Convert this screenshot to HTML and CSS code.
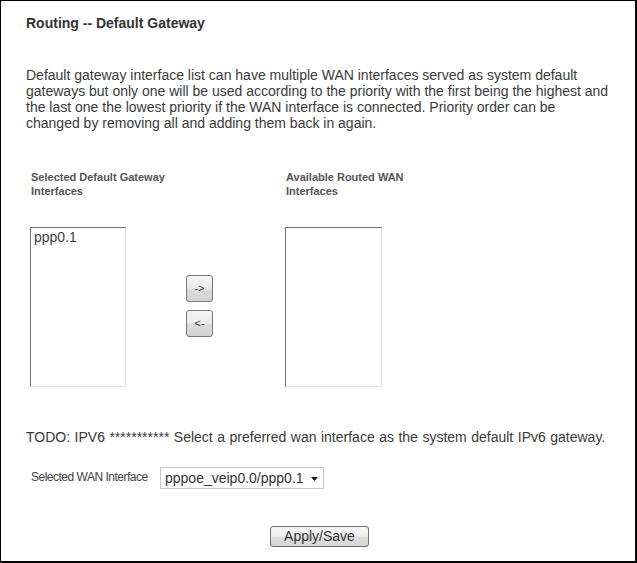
FILE: index.html
```html
<!DOCTYPE html>
<html>
<head>
<meta charset="utf-8">
<title>Routing -- Default Gateway</title>
<link rel="stylesheet" href="styles.css">
</head>
<body>
<div class="page">
  <h1 class="title">Routing -- Default Gateway</h1>
  <p class="intro">Default gateway interface list can have multiple WAN interfaces served as system default gateways but only one will be used according to the priority with the first being the highest and the last one the lowest priority if the WAN interface is connected. Priority order can be changed by removing all and adding them back in again.</p>

  <div class="chooser">
    <div class="col-head">Selected Default Gateway<br>Interfaces</div>
    <div class="col-head-empty"></div>
    <div class="col-head">Available Routed WAN<br>Interfaces</div>

    <div class="listbox">
      <div class="option">ppp0.1</div>
    </div>
    <div class="movers">
      <button class="move-btn" type="button">-&gt;</button>
      <button class="move-btn" type="button">&lt;-</button>
    </div>
    <div class="listbox listbox-right"></div>
  </div>

  <p class="todo">TODO: IPV6 *********** Select a preferred wan interface as the system default IPv6 gateway.</p>

  <div class="wan-row">
    <span class="wan-label">Selected WAN Interface</span>
    <span class="select-wrap">
      <span class="select-box">pppoe_veip0.0/ppp0.1</span>
      <svg class="select-arrow" width="7" height="4" viewBox="0 0 7 4"><path d="M0 0H7L3.5 4Z" fill="#111"/></svg>
    </span>
  </div>

  <div class="actions">
    <button class="apply-btn" type="button">Apply/Save</button>
  </div>
</div>
</body>
</html>
```

FILE: styles.css
```css
html, body {
  margin: 0;
  padding: 0;
  background: #ffffff;
}

.page {
  box-sizing: border-box;
  width: 637px;
  height: 563px;
  border-style: solid;
  border-color: #000;
  border-width: 1px 2px 2px 1px;
  padding: 14px 24px 0 25px;
  font-family: "Liberation Sans", Arial, sans-serif;
  color: #3a3a3a;
}

.title {
  margin: 0;
  font-size: 14px;
  line-height: 16px;
  font-weight: bold;
  color: #333;
}

.intro {
  margin: 36px 0 0 0;
  font-size: 14px;
  line-height: 16px;
}

.chooser {
  margin: 39px 0 0 4px;
  display: grid;
  grid-template-columns: 156px 99px 120px;
  grid-template-rows: 26px 160px;
  row-gap: 31px;
}

.col-head {
  font-size: 11px;
  line-height: 14px;
  font-weight: bold;
  color: #555;
  padding: 0 0 0 1px;
  white-space: nowrap;
}

.listbox {
  box-sizing: border-box;
  width: 96px;
  height: 160px;
  border-style: solid;
  border-width: 1px;
  border-color: #6f6f6f #e2e2e2 #e2e2e2 #6f6f6f;
  background: #fff;
  padding: 1px 0 0 3px;
}

.listbox-right {
  width: 97px;
}

.option {
  font-size: 14px;
  line-height: 16px;
  color: #3c3c3c;
}

.movers {
  display: flex;
  flex-direction: column;
  justify-content: center;
  gap: 8px;
  padding-bottom: 3px;
}

.move-btn {
  box-sizing: border-box;
  width: 27px;
  height: 27px;
  padding: 0;
  margin: 0;
  border: 1px solid #7a7a7a;
  border-radius: 3px;
  background: linear-gradient(#f4f4f4 0%, #ececec 48%, #dedede 52%, #d2d2d2 100%);
  font-family: "Liberation Sans", Arial, sans-serif;
  font-size: 11px;
  color: #333;
  line-height: 25px;
}

.todo {
  margin: 42px 0 0 0;
  font-size: 14px;
  line-height: 16px;
  word-spacing: 0.6px;
  white-space: nowrap;
}

.wan-row {
  margin-top: 22px;
  display: flex;
  align-items: center;
  height: 22px;
}

.wan-label {
  width: 134px;
  flex: none;
  padding-left: 5px;
  box-sizing: border-box;
  font-size: 12px;
  letter-spacing: -0.5px;
  color: #444;
  padding-bottom: 3px;
}

.select-wrap {
  position: relative;
  display: inline-block;
}

.select-box {
  display: block;
  box-sizing: border-box;
  width: 164px;
  height: 22px;
  border: 1px solid #c9c9c9;
  background: #fff;
  padding: 2px 0 0 4px;
  font-size: 14px;
  line-height: 16px;
  color: #333;
}

.select-arrow {
  position: absolute;
  right: 6px;
  top: 10px;
}

.actions {
  margin-top: 37px;
  text-align: center;
}

.apply-btn {
  box-sizing: border-box;
  width: 99px;
  height: 21px;
  margin: 0 0 0 2px;
  padding: 0;
  border: 1px solid #6e6e6e;
  border-radius: 3px;
  background: linear-gradient(#f6f6f6 0%, #ededed 48%, #dedede 52%, #d6d6d6 100%);
  font-family: "Liberation Sans", Arial, sans-serif;
  font-size: 14px;
  line-height: 19px;
  color: #333;
}
```
